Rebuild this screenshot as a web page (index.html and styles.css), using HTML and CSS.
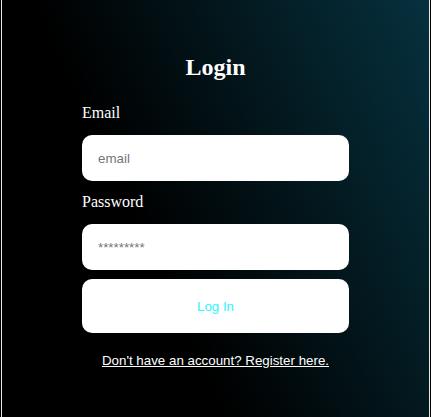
FILE: index.html
```html
<!DOCTYPE html>
<html lang="en">
<head>
<meta charset="utf-8">
<title>Login</title>
<link rel="stylesheet" href="styles.css">
</head>
<body>
<div class="page">
  <form class="login">
    <h2 class="title">Login</h2>
    <label class="label" for="email">Email</label>
    <input class="field" id="email" type="email" placeholder="email">
    <label class="label" for="password">Password</label>
    <input class="field" id="password" type="password" placeholder="*********">
    <button class="submit" type="button">Log In</button>
    <a class="register" href="#">Don't have an account? Register here.</a>
  </form>
</div>
</body>
</html>
```

FILE: styles.css
```css
html, body {
  margin: 0;
  padding: 0;
  background: #000;
}

.page {
  box-sizing: border-box;
  width: 429px;
  height: 417px;
  margin-left: 1px;
  border-left: 1px solid #e8e8e8;
  border-right: 1px solid #e8e8e8;
  background: linear-gradient(65deg, #000 36%, #06313e 100%);
  display: flex;
  justify-content: center;
}

.login {
  width: 267px;
  display: flex;
  flex-direction: column;
  padding-top: 53px;
}

.title {
  margin: 0 0 23px;
  font-family: "Liberation Serif", serif;
  font-size: 24px;
  line-height: 28px;
  font-weight: bold;
  color: #fff;
  text-align: center;
}

.label {
  font-family: "Liberation Serif", serif;
  font-size: 16px;
  line-height: 18px;
  color: #fff;
  margin-bottom: 13px;
}

.field {
  box-sizing: border-box;
  height: 46px;
  border: none;
  border-radius: 10px;
  background: #fff;
  padding: 0 16px;
  font-family: "Liberation Sans", Arial, sans-serif;
  font-size: 13.333px;
  color: #333;
  margin-bottom: 12px;
  outline: none;
}

.field::placeholder {
  color: #757575;
}

#password {
  margin-bottom: 9px;
}

.submit {
  height: 54px;
  border: none;
  border-radius: 10px;
  background: #fff;
  color: #2ef4ff;
  font-family: "Liberation Sans", Arial, sans-serif;
  font-size: 13.333px;
  cursor: pointer;
  margin-bottom: 20px;
}

.register {
  font-family: "Liberation Sans", Arial, sans-serif;
  font-size: 13.333px;
  color: #fff;
  text-decoration: underline;
  text-align: center;
}
```
